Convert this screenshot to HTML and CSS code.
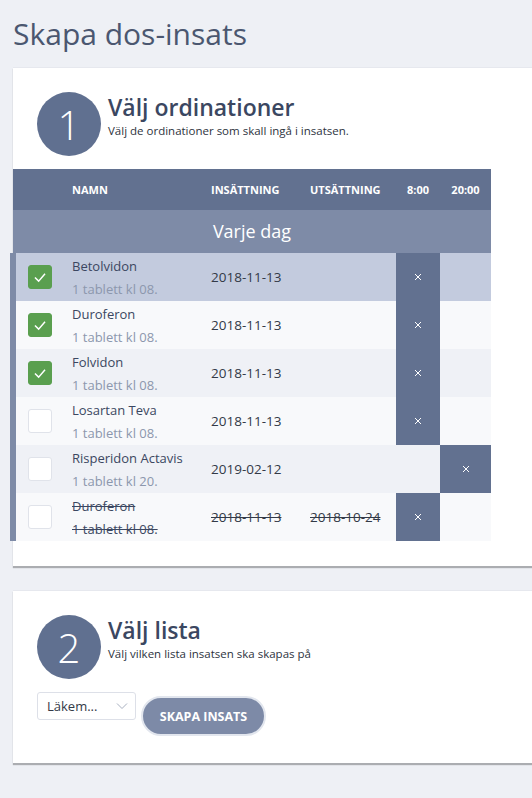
FILE: index.html
```html
<!DOCTYPE html>
<html lang="sv">
<head>
  <meta charset="UTF-8" />
  <title>Skapa dos-insats</title>
  <link rel="stylesheet" href="styles.css">
</head>
<body>

  <h1 class="page-title">Skapa dos-insats</h1>

  <div class="card">
    <div class="step">
      <div class="step-nr">1</div>
      <div class="step-text">
        <h2>Välj ordinationer</h2>
        <p>Välj de ordinationer som skall ingå i insatsen.</p>
      </div>
    </div>

    <div class="table">
      <div class="thead">
        <div></div>
        <div>NAMN</div>
        <div>INSÄTTNING</div>
        <div>UTSÄTTNING</div>
        <div class="time">8:00</div>
        <div class="time">20:00</div>
      </div>
      <div class="group">Varje dag</div>

      <div class="rows">
        <div class="row selected">
          <div><span class="check on"><svg viewBox="0 0 24 24"><path d="M6.5 12.5l4 4 7-8" /></svg></span></div>
          <div class="name">Betolvidon<span>1 tablett kl 08.</span></div>
          <div class="date">2018-11-13</div>
          <div></div>
          <div class="dose"><svg viewBox="0 0 8 8"><path d="M1 1l6 6M7 1l-6 6" /></svg></div>
          <div></div>
        </div>
        <div class="row">
          <div><span class="check on"><svg viewBox="0 0 24 24"><path d="M6.5 12.5l4 4 7-8" /></svg></span></div>
          <div class="name">Duroferon<span>1 tablett kl 08.</span></div>
          <div class="date">2018-11-13</div>
          <div></div>
          <div class="dose"><svg viewBox="0 0 8 8"><path d="M1 1l6 6M7 1l-6 6" /></svg></div>
          <div></div>
        </div>
        <div class="row">
          <div><span class="check on"><svg viewBox="0 0 24 24"><path d="M6.5 12.5l4 4 7-8" /></svg></span></div>
          <div class="name">Folvidon<span>1 tablett kl 08.</span></div>
          <div class="date">2018-11-13</div>
          <div></div>
          <div class="dose"><svg viewBox="0 0 8 8"><path d="M1 1l6 6M7 1l-6 6" /></svg></div>
          <div></div>
        </div>
        <div class="row">
          <div><span class="check"></span></div>
          <div class="name">Losartan Teva<span>1 tablett kl 08.</span></div>
          <div class="date">2018-11-13</div>
          <div></div>
          <div class="dose"><svg viewBox="0 0 8 8"><path d="M1 1l6 6M7 1l-6 6" /></svg></div>
          <div></div>
        </div>
        <div class="row">
          <div><span class="check"></span></div>
          <div class="name">Risperidon Actavis<span>1 tablett kl 20.</span></div>
          <div class="date">2019-02-12</div>
          <div></div>
          <div></div>
          <div class="dose"><svg viewBox="0 0 8 8"><path d="M1 1l6 6M7 1l-6 6" /></svg></div>
        </div>
        <div class="row ended">
          <div><span class="check"></span></div>
          <div class="name">Duroferon<span>1 tablett kl 08.</span></div>
          <div class="date">2018-11-13</div>
          <div class="date">2018-10-24</div>
          <div class="dose"><svg viewBox="0 0 8 8"><path d="M1 1l6 6M7 1l-6 6" /></svg></div>
          <div></div>
        </div>
      </div>
    </div>
  </div>

  <div class="card card-list">
    <div class="step">
      <div class="step-nr">2</div>
      <div class="step-text">
        <h2>Välj lista</h2>
        <p>Välj vilken lista insatsen ska skapas på</p>
      </div>
    </div>

    <div class="actions">
      <div class="select">
        Läkem...
        <svg viewBox="0 0 12 8"><path d="M1 1.5l5 5 5-5" /></svg>
      </div>
      <button class="btn">SKAPA INSATS</button>
    </div>
  </div>

</body>
</html>
```

FILE: styles.css
```css
body {
  font-family: 'Open Sans', sans-serif;
  background-color: #eef0f5;
  color: #3b4761;
  margin: 0;
  padding: 14px 0 30px 13px;
  overflow-x: hidden;
}

.page-title {
  font-size: 30px;
  font-weight: 400;
  color: #4b5770;
  margin: 0 0 13px 0;
  line-height: 40px;
}

.card {
  background: #fff;
  padding: 24px 0 25px 24px;
  border-top: 1px solid #e6e8ee;
  box-shadow: 0 2px 1px rgba(0,0,0,0.28);
  margin-bottom: 24px;
}

.step {
  display: flex;
  align-items: flex-start;
  gap: 7px;
}

.step-text {
  margin-top: 1px;
}

.step-nr {
  width: 64px;
  height: 64px;
  border-radius: 50%;
  background-color: #607090;
  color: #fff;
  font-size: 40px;
  font-weight: 300;
  display: flex;
  align-items: center;
  justify-content: center;
  flex-shrink: 0;
}

h2 {
  font-size: 23px;
  font-weight: 600;
  margin: 0;
  line-height: 28px;
  color: #3b4761;
}

.step p {
  font-size: 11.5px;
  margin: 2px 0 0 0;
  color: #2d3340;
}

.table {
  margin: 13px 0 0 -24px;
  width: 478px;
}

.thead, .row {
  display: grid;
  grid-template-columns: 59px 139px 99px 86px 44px 51px;
}

.thead {
  background-color: #627190;
  color: #fff;
  font-size: 11px;
  font-weight: 700;
  height: 41px;
  align-items: center;
}

.thead .time, .dose {
  text-align: center;
}

.group {
  background-color: #7e8ba7;
  color: #fff;
  font-size: 18px;
  height: 43px;
  line-height: 43px;
  text-align: center;
}

.rows {
  margin-left: -3px;
  border-left: 6px solid #7e8ba7;
}

.row {
  grid-template-columns: 56px 139px 99px 86px 44px 51px;
  height: 48px;
  align-items: center;
  background-color: #f8f9fb;
}

.row:nth-child(odd) {
  background-color: #eff1f6;
}

.row.selected {
  background-color: #c3cbde;
}

.row > div {
  height: 100%;
  display: flex;
  align-items: center;
}

.check {
  width: 22px;
  height: 22px;
  margin-left: 12px;
  border: 1px solid #e0e3ea;
  border-radius: 3px;
  background: #fff;
  display: block;
}

.check.on {
  background-color: #5a9f4f;
  border-color: #5a9f4f;
}

.check svg {
  width: 22px;
  height: 22px;
  display: block;
}

.check path {
  fill: none;
  stroke: #fff;
  stroke-width: 1.6;
}

.row .name {
  flex-direction: column;
  align-items: flex-start;
  justify-content: flex-start;
  padding-top: 2px;
  font-size: 13px;
  line-height: 23px;
  color: #3b4761;
  box-sizing: border-box;
  white-space: nowrap;
}

.name span {
  color: #8c97ad;
}

.date {
  font-size: 13.5px;
  color: #333a47;
}

.row > .dose {
  background-color: #627190;
  justify-content: center;
}

.dose svg {
  width: 8px;
  height: 8px;
}

.dose path {
  stroke: #fff;
  stroke-width: 1;
}

.ended .name, .ended .date {
  text-decoration: line-through;
}

.ended .name span {
  color: #3b4761;
}

.card-list {
  padding-bottom: 27px;
}

.actions {
  display: flex;
  align-items: flex-start;
  gap: 5px;
  margin-top: 13px;
}

.select {
  height: 26px;
  border: 1px solid #dde0e8;
  border-radius: 3px;
  box-sizing: content-box;
  font-size: 13px;
  color: #333a47;
  display: flex;
  align-items: center;
  justify-content: space-between;
  padding: 0 0 0 9px;
  width: 88px;
}

.select svg {
  width: 12px;
  height: 8px;
  margin-right: 7px;
}

.select path {
  fill: none;
  stroke: #a8b0c0;
  stroke-width: 1;
}

.btn {
  margin-top: 4px;
  background-color: #7d8aa7;
  color: #fff;
  font-family: 'Open Sans', sans-serif;
  font-size: 12.5px;
  font-weight: 700;
  width: 125px;
  height: 40px;
  border: 2px solid #e2e6ee;
  border-radius: 20px;
  cursor: pointer;
}
```
